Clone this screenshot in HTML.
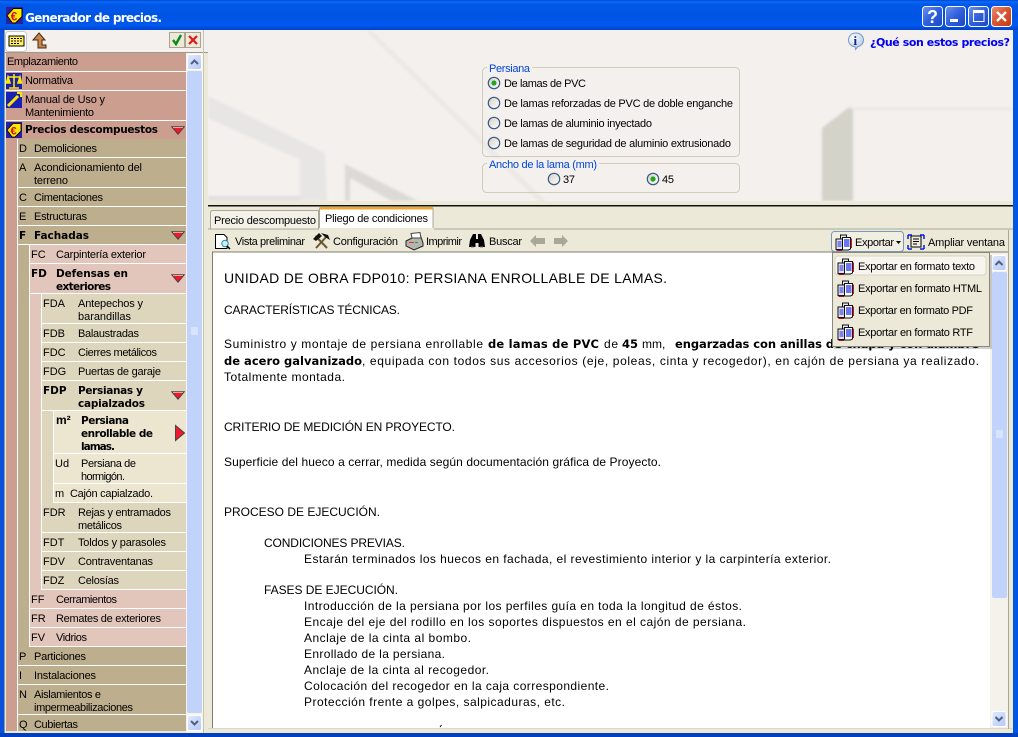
<!DOCTYPE html>
<html><head><meta charset="utf-8"><title>Generador de precios</title>
<style>
html,body{margin:0;padding:0;width:1018px;height:737px;overflow:hidden;background:#0055e5}
svg{display:block}
text{font-family:"Liberation Sans",sans-serif;font-size:11px;fill:#000;white-space:pre}
.b{font-family:"DejaVu Sans","Liberation Sans",sans-serif;font-weight:bold;font-size:10.5px}
.c{font-size:12px}
.bc{font-family:"DejaVu Sans","Liberation Sans",sans-serif;font-weight:bold;font-size:11.5px}
.l{fill:#0046d5}
</style></head><body>
<svg width="1018" height="737" viewBox="0 0 1018 737" xmlns="http://www.w3.org/2000/svg">
<defs>
<linearGradient id="tb" x1="0" y1="0" x2="0" y2="1">
<stop offset="0" stop-color="#0043cf"/><stop offset=".06" stop-color="#0a6af8"/><stop offset=".14" stop-color="#0058e8"/><stop offset=".5" stop-color="#0054e3"/><stop offset=".85" stop-color="#0058ee"/><stop offset="1" stop-color="#0043cf"/>
</linearGradient>
<linearGradient id="cb" x1="0" y1="0" x2="1" y2="1"><stop offset="0" stop-color="#6f93ee"/><stop offset=".5" stop-color="#2f5fdc"/><stop offset="1" stop-color="#1d44c4"/></linearGradient>
<linearGradient id="cr" x1="0" y1="0" x2="1" y2="1"><stop offset="0" stop-color="#e89078"/><stop offset=".5" stop-color="#d9532c"/><stop offset="1" stop-color="#c23a16"/></linearGradient>
<linearGradient id="sb" x1="0" y1="0" x2="1" y2="1"><stop offset="0" stop-color="#e2eafe"/><stop offset="1" stop-color="#b4c8f6"/></linearGradient>
<linearGradient id="rd" x1="0" y1="0" x2="1" y2="1"><stop offset="0" stop-color="#d4d0c8"/><stop offset="1" stop-color="#fff"/></linearGradient>
<radialGradient id="inf" cx=".35" cy=".3" r=".8"><stop offset="0" stop-color="#fff"/><stop offset="1" stop-color="#a8c4e8"/></radialGradient>
<filter id="bl" x="-10%" y="-10%" width="120%" height="120%"><feGaussianBlur stdDeviation="1.2"/></filter>
<symbol id="euro" viewBox="0 0 16 16">
<rect width="16" height="16" fill="#2a1fa0"/><path d="M1 8L7 1.500H15V9L9 15H6Z" fill="#ffe700" stroke="#000" stroke-width=".8"/>
<text x="4.500" y="12.500" style="font-size:11px;font-weight:bold;fill:#d0101a">€</text>
</symbol>
<symbol id="exp" viewBox="0 0 17 17">
<path d="M5.500 1H11.500V6H5.500Z" fill="#e8e8f4" stroke="#111" stroke-width="1"/>
<path d="M1 5H8V15.500H1Z" fill="#dfe0f4" stroke="#111" stroke-width="1"/>
<path d="M2.500 8H6.500M2.500 10H6.500M2.500 12H6.500" stroke="#1a2ad8" stroke-width="1.100"/>
<path d="M7.500 3.500H15.500V15L13.500 16H7.500Z" fill="#fff" stroke="#111" stroke-width="1"/>
<path d="M9 6H14.500M9 8H14.500M9 10H14.500M9 12H14.500" stroke="#1428e8" stroke-width="1.300"/>
<path d="M1.500 16.500H7" stroke="#a01010" stroke-width="1.200"/><path d="M16.300 4.500V14" stroke="#a01010" stroke-width="1.200"/>
</symbol>
<symbol id="rad" viewBox="0 0 14 14"><circle cx="7" cy="7" r="5.700" fill="url(#rd)" stroke="#3c5a80" stroke-width="1.200"/></symbol>
<symbol id="rado" viewBox="0 0 14 14"><circle cx="7" cy="7" r="5.700" fill="url(#rd)" stroke="#3c5a80" stroke-width="1.200"/><circle cx="7" cy="7" r="2.600" fill="#1fa81f"/></symbol>
<symbol id="tri" viewBox="0 0 14 9"><path d="M.8 .8H13.200L7 8.200Z" fill="#f0182a" stroke="#444" stroke-width="1"/><path d="M2 1.500H12" stroke="#f7a0a0" stroke-width="1"/></symbol>
</defs>

<!-- frame -->
<rect width="1018" height="737" fill="#0055e5"/>
<rect width="1018" height="30" fill="url(#tb)"/>
<rect x="0" y="30" width="4" height="707" fill="#0a50d8"/>
<rect x="4" y="30" width="1" height="703" fill="#7f9db9"/>
<rect x="5" y="30" width="1008" height="703" fill="#ece9d8"/>
<rect x="0" y="733" width="1018" height="4" fill="#0040c0"/>
<use href="#euro" x="6" y="7" width="17" height="17"/>
<text x="25" y="22" class="bc" style="font-size:12px;fill:#fff" textLength="137">Generador de precios.</text>

<!-- caption buttons -->
<rect x="922.500" y="6.500" width="20" height="20" rx="3" fill="url(#cb)" stroke="#fff"/>
<text x="927" y="23" style="font-size:18px;font-weight:bold;fill:#fff">?</text>
<rect x="945.500" y="6.500" width="20" height="20" rx="3" fill="url(#cb)" stroke="#fff"/>
<rect x="950" y="19" width="8" height="3" fill="#fff"/>
<rect x="968.500" y="6.500" width="20" height="20" rx="3" fill="url(#cb)" stroke="#fff"/>
<rect x="973.500" y="11" width="10.500" height="10.500" fill="none" stroke="#fff" stroke-width="1"/><rect x="973" y="10" width="11" height="3" fill="#fff"/>
<rect x="991.500" y="6.500" width="20" height="20" rx="3" fill="url(#cr)" stroke="#fff"/>
<path d="M997 12L1006 21M1006 12L997 21" stroke="#fff" stroke-width="2.400"/>

<!-- left toolbar -->
<rect x="5" y="30" width="203" height="22" fill="#f3f0ee"/>
<rect x="5.500" y="31.500" width="21" height="20" rx="3" fill="#fff" stroke="#c8c8d4"/>
<rect x="9" y="36" width="15" height="10" fill="#ffef60" stroke="#000"/>
<path d="M11 38.500H22M11 41H22M11 43.500H19" stroke="#000" stroke-dasharray="2 1"/>
<path d="M39 33L45 40H42V45H46V48H38V40H33Z" fill="#c8864a" stroke="#4a2a10"/>
<rect x="169.500" y="32.500" width="15" height="15" fill="#ece9d8" stroke="#a8a490"/>
<path d="M173 40L176 44L181 35" fill="none" stroke="#0a8a1a" stroke-width="2.400"/>
<rect x="185.500" y="32.500" width="15" height="15" fill="#ece9d8" stroke="#a8a490"/>
<path d="M189 36L197 44M197 36L189 44" stroke="#e01818" stroke-width="2.200"/>
<rect x="5" y="52" width="203" height="1" fill="#9c9a8c"/>

<!-- tree columns -->
<rect x="6" y="53" width="180" height="678" fill="#cc9e90"/>
<rect x="6" y="71" width="180" height="1" fill="#fff"/><rect x="6" y="90" width="180" height="1" fill="#fff"/><rect x="6" y="120" width="180" height="1" fill="#fff"/>
<rect x="17" y="139" width="169" height="592" fill="#fff"/>
<rect x="18" y="245" width="11" height="402" fill="#bdae8e"/>
<rect x="30" y="294" width="11" height="296" fill="#e2c6bc"/>
<rect x="42" y="411" width="11" height="92" fill="#ddd6bd"/>
<!-- level 1 -->
<g fill="#bdae8e">
<rect x="18" y="139" width="168" height="18"/><rect x="18" y="158" width="168" height="29"/><rect x="18" y="188" width="168" height="18"/><rect x="18" y="207" width="168" height="18"/><rect x="18" y="226" width="168" height="18"/>
<rect x="18" y="647" width="168" height="18"/><rect x="18" y="666" width="168" height="18"/><rect x="18" y="685" width="168" height="29"/><rect x="18" y="715" width="168" height="16"/>
</g>
<!-- level 2 -->
<g fill="#e2c6bc">
<rect x="30" y="245" width="156" height="18"/><rect x="30" y="264" width="156" height="29"/>
<rect x="30" y="590" width="156" height="18"/><rect x="30" y="609" width="156" height="18"/><rect x="30" y="628" width="156" height="18"/>
</g>
<!-- level 3 -->
<g fill="#ddd6bd">
<rect x="42" y="294" width="144" height="29"/><rect x="42" y="324" width="144" height="18"/><rect x="42" y="343" width="144" height="18"/><rect x="42" y="362" width="144" height="18"/><rect x="42" y="381" width="144" height="29"/>
<rect x="42" y="503" width="144" height="29"/><rect x="42" y="533" width="144" height="18"/><rect x="42" y="552" width="144" height="18"/><rect x="42" y="571" width="144" height="18"/>
</g>
<!-- level 4 -->
<g fill="#ece6d1">
<rect x="54" y="411" width="132" height="42"/><rect x="54" y="454" width="132" height="29"/><rect x="54" y="484" width="132" height="18"/>
</g>

<!-- tree icons -->
<rect x="6" y="73" width="16" height="16" fill="#1a20b0"/><path d="M14 74V88M9 88H19M8 77H20M8 77L6.500 83H10ZM20 77L18 83H21.500Z" stroke="#ffe700" stroke-width="1.600" fill="#ffe700"/>
<rect x="6" y="92" width="16" height="16" fill="#1a20b0"/><path d="M8 106L18 96" stroke="#ffe700" stroke-width="3"/><path d="M17 93H21V97" fill="none" stroke="#ffe700" stroke-width="2"/>
<use href="#euro" x="6" y="122" width="16" height="16"/>
<use href="#tri" x="171" y="126" width="14" height="9"/>
<use href="#tri" x="171" y="231" width="14" height="9"/>
<use href="#tri" x="171" y="274" width="14" height="9"/>
<use href="#tri" x="171" y="391" width="14" height="9"/>
<path d="M175.500 425.500V440.500L184.500 433Z" fill="#f0182a" stroke="#444"/>

<!-- tree text -->
<text x="7" y="65" textLength="71">Emplazamiento</text>
<text x="25" y="84" textLength="48">Normativa</text>
<text x="25" y="103" textLength="80">Manual de Uso y</text>
<text x="25" y="116" textLength="69">Mantenimiento</text>
<text x="25" y="133" class="b" textLength="133">Precios descompuestos</text>
<text x="19" y="152">D</text><text x="34" y="152" textLength="63">Demoliciones</text>
<text x="19" y="171">A</text><text x="34" y="171" textLength="108">Acondicionamiento del</text>
<text x="34" y="184" textLength="34">terreno</text>
<text x="19" y="201">C</text><text x="34" y="201" textLength="69">Cimentaciones</text>
<text x="19" y="220">E</text><text x="34" y="220" textLength="53">Estructuras</text>
<text x="19" y="239" class="b">F</text><text x="34" y="239" class="b" textLength="55">Fachadas</text>
<text x="31" y="258">FC</text><text x="56" y="258" textLength="90">Carpintería exterior</text>
<text x="31" y="277" class="b">FD</text><text x="56" y="277" class="b" textLength="72">Defensas en</text>
<text x="56" y="290" class="b" textLength="55">exteriores</text>
<text x="43" y="307">FDA</text><text x="78" y="307" textLength="65">Antepechos y</text>
<text x="78" y="320" textLength="53">barandillas</text>
<text x="43" y="337">FDB</text><text x="78" y="337" textLength="61">Balaustradas</text>
<text x="43" y="356">FDC</text><text x="78" y="356" textLength="79">Cierres metálicos</text>
<text x="43" y="375">FDG</text><text x="78" y="375" textLength="83">Puertas de garaje</text>
<text x="43" y="394" class="b">FDP</text><text x="78" y="394" class="b" textLength="65">Persianas y</text>
<text x="78" y="407" class="b" textLength="67">capialzados</text>
<text x="56" y="424" style="font-size:12px;font-weight:bold">m²</text><text x="81" y="424" class="b" textLength="48">Persiana</text>
<text x="81" y="437" class="b" textLength="72">enrollable de</text>
<text x="81" y="450" class="b" textLength="34">lamas.</text>
<text x="55" y="467">Ud</text><text x="81" y="467" textLength="55">Persiana de</text>
<text x="81" y="480" textLength="44">hormigón.</text>
<text x="55" y="497">m</text><text x="70" y="497" textLength="83">Cajón capialzado.</text>
<text x="43" y="516">FDR</text><text x="78" y="516" textLength="93">Rejas y entramados</text>
<text x="78" y="529" textLength="44">metálicos</text>
<text x="43" y="546">FDT</text><text x="78" y="546" textLength="88">Toldos y parasoles</text>
<text x="43" y="565">FDV</text><text x="78" y="565" textLength="75">Contraventanas</text>
<text x="43" y="584">FDZ</text><text x="78" y="584" textLength="41">Celosías</text>
<text x="31" y="603">FF</text><text x="56" y="603" textLength="61">Cerramientos</text>
<text x="31" y="622">FR</text><text x="56" y="622" textLength="105">Remates de exteriores</text>
<text x="31" y="641">FV</text><text x="56" y="641" textLength="31">Vidrios</text>
<text x="19" y="660">P</text><text x="34" y="660" textLength="52">Particiones</text>
<text x="19" y="679">I</text><text x="34" y="679" textLength="62">Instalaciones</text>
<text x="19" y="698">N</text><text x="34" y="698" textLength="67">Aislamientos e</text>
<text x="34" y="711" textLength="99">impermeabilizaciones</text>
<text x="19" y="728">Q</text><text x="34" y="728" textLength="44">Cubiertas</text>

<!-- left scrollbar -->
<rect x="186" y="53" width="17" height="680" fill="#f6f4ec"/>
<rect x="187" y="71" width="15" height="642" rx="2" fill="#c1d3fb"/>
<path d="M191 328H198M191 330H198M191 332H198M191 334H198" stroke="#eef3ff"/>
<rect x="187.500" y="54.500" width="14" height="15" rx="2" fill="url(#sb)" stroke="#fff"/>
<path d="M191 64L194.500 60.500L198 64" fill="none" stroke="#4d6185" stroke-width="2"/>
<rect x="187.500" y="715.500" width="14" height="15" rx="2" fill="url(#sb)" stroke="#fff"/>
<path d="M191 721L194.500 724.500L198 721" fill="none" stroke="#4d6185" stroke-width="2"/>
<rect x="203" y="30" width="1" height="703" fill="#c8c5b4"/>

<!-- top-right area -->
<rect x="208" y="30" width="805" height="171" fill="#f3f0ee"/>
<clipPath id="tc"><rect x="208" y="30" width="805" height="171"/></clipPath>
<g clip-path="url(#tc)"><g filter="url(#bl)">
<path d="M208 96L325 153L327 201H300V160L208 118Z" fill="#e8e6e5"/>
<path d="M208 196H300V201H208Z" fill="#e2e0de"/>
<path d="M345 164L418 201H392L350 178V201H345Z" fill="#dcdad6"/>
<path d="M366 31H373L560 215H552Z" fill="#ecE9e5"/>
<path d="M822 128L848 108H853V201H822Z" fill="#d3d3ca"/>
<path d="M852 108H1013V110H852Z" fill="#ebe6e3"/>
</g></g>
<rect x="208" y="205" width="805" height="1.500" fill="#111"/>

<!-- info link -->
<path d="M856 33C860.500 33 863.500 36 863.500 40C863.500 43.500 861 46 858 46.500L855.500 49.500L855 46.800C851.500 46.300 848.500 44 848.500 40C848.500 36 851.500 33 856 33Z" fill="url(#inf)" stroke="#7c9cc4"/>
<text x="853.500" y="45" style="font-size:13px;font-weight:bold;font-family:'Liberation Serif',serif;fill:#10208a">i</text>
<text x="870" y="46" class="bc" style="fill:#0000f0;font-size:11px" textLength="140">¿Qué son estos precios?</text>

<!-- group boxes -->
<rect x="482.500" y="67.500" width="257" height="89" rx="4" fill="none" stroke="#d0ccb8"/>
<rect x="487" y="62" width="45" height="10" fill="#f3f0ee"/>
<text x="489" y="72" class="l" textLength="41">Persiana</text>
<use href="#rado" x="487" y="76" width="14" height="14"/>
<use href="#rad" x="487" y="96" width="14" height="14"/>
<use href="#rad" x="487" y="116" width="14" height="14"/>
<use href="#rad" x="487" y="136" width="14" height="14"/>
<text x="504" y="87" textLength="82">De lamas de PVC</text>
<text x="504" y="107" textLength="229">De lamas reforzadas de PVC de doble enganche</text>
<text x="504" y="127" textLength="148">De lamas de aluminio inyectado</text>
<text x="504" y="147" textLength="227">De lamas de seguridad de aluminio extrusionado</text>
<rect x="482.500" y="163.500" width="257" height="29" rx="4" fill="none" stroke="#d0ccb8"/>
<rect x="487" y="158" width="112" height="10" fill="#f3f0ee"/>
<text x="489" y="168" class="l" textLength="108">Ancho de la lama (mm)</text>
<use href="#rad" x="547" y="172" width="14" height="14"/>
<text x="563" y="183" textLength="12">37</text>
<use href="#rado" x="646" y="172" width="14" height="14"/>
<text x="662" y="183" textLength="12">45</text>

<!-- tabs -->
<path d="M210.500 229V213Q210.500 210.500 213 210.500H318.500V229Z" fill="#f4f2e8" stroke="#a8a898"/>
<text x="214" y="224" textLength="102">Precio descompuesto</text>
<path d="M319.500 229V209Q319.500 207.500 321 207.500H431Q433 207.500 433 209V229Z" fill="#fff" stroke="#a8a898"/>
<rect x="320" y="207" width="113" height="2.500" fill="#f0a830"/>
<text x="325" y="222" textLength="103">Pliego de condiciones</text>
<rect x="208" y="228.500" width="805" height="1" fill="#a8a898"/>
<rect x="319" y="228" width="115" height="2" fill="#ece9d8"/>

<!-- toolbar icons -->
<path d="M215.500 234.500H224L227 237.500V248.500H215.500Z" fill="#fff" stroke="#000"/><circle cx="225" cy="243.500" r="3.200" fill="#cfeef5" stroke="#2090a8"/><path d="M227 246L230 249" stroke="#000" stroke-width="1.500"/>
<text x="235" y="245" textLength="70">Vista preliminar</text>
<path d="M315.500 236L327 248" stroke="#6a5530" stroke-width="2"/><path d="M327 236L316 248" stroke="#6a5530" stroke-width="2"/><path d="M313 239L319 233L322 236L316 241ZM321 233L328 235L330 240L325 237Z" fill="#111"/>
<text x="333" y="245" textLength="65">Configuración</text>
<path d="M406 241L414 237H421L423 243V246L414 250L406 246Z" fill="#b5b5b0" stroke="#222"/><path d="M411 233.500L420 232.500L421 238H412Z" fill="#fff" stroke="#444"/><path d="M409 242.500H414" stroke="#e03030"/><path d="M415 242.500H418" stroke="#20a040"/>
<text x="426" y="245" textLength="36">Imprimir</text>
<path d="M469 247L470 240L473 234H476V239H478V234H481L484 240L485 247H478.500V243H475.500V247Z" fill="#000"/><path d="M471 247H474M480 247H483" stroke="#777"/>
<text x="489" y="245" textLength="33">Buscar</text>
<path d="M530 241L536 235V238H545V244H536V247Z" fill="#a8a898"/>
<path d="M568 241L562 235V238H554V244H562V247Z" fill="#a8a898"/>

<!-- content -->
<rect x="212" y="252" width="778" height="476" fill="#fff"/>
<path d="M212 252H1008" stroke="#7f7c70"/><path d="M212.500 252V728" stroke="#7f7c70"/>
<rect x="208" y="728" width="805" height="1" fill="#d8d6ca"/>
<rect x="208" y="730" width="805" height="3" fill="#ece9d8"/>
<text x="224" y="283" style="font-size:14px" textLength="443">UNIDAD DE OBRA FDP010: PERSIANA ENROLLABLE DE LAMAS.</text>
<text x="224" y="314" class="c" textLength="176">CARACTERÍSTICAS TÉCNICAS.</text>
<text x="224" y="348" class="c" textLength="259">Suministro y montaje de persiana enrollable</text>
<text x="488" y="348" class="bc" textLength="111">de lamas de PVC</text>
<text x="604" y="348" class="c" textLength="14">de</text>
<text x="622" y="348" class="bc">45</text>
<text x="642" y="348" class="c">mm,</text>
<text x="675" y="348" class="bc" textLength="304">engarzadas con anillas de chapa y con alambre</text>
<text x="224" y="365" class="bc" textLength="138">de acero galvanizado</text>
<text x="362" y="365" class="c" textLength="617">, equipada con todos sus accesorios (eje, poleas, cinta y recogedor), en cajón de persiana ya realizado.</text>
<text x="224" y="381" class="c" textLength="121">Totalmente montada.</text>
<text x="224" y="431" class="c" textLength="231">CRITERIO DE MEDICIÓN EN PROYECTO.</text>
<text x="224" y="466" class="c" textLength="437">Superficie del hueco a cerrar, medida según documentación gráfica de Proyecto.</text>
<text x="224" y="516" class="c" textLength="156">PROCESO DE EJECUCIÓN.</text>
<text x="264" y="547" class="c" textLength="141">CONDICIONES PREVIAS.</text>
<text x="304" y="563" class="c" textLength="527">Estarán terminados los huecos en fachada, el revestimiento interior y la carpintería exterior.</text>
<text x="264" y="594" class="c" textLength="134">FASES DE EJECUCIÓN.</text>
<text x="304" y="610" class="c" textLength="438">Introducción de la persiana por los perfiles guía en toda la longitud de éstos.</text>
<text x="304" y="626" class="c" textLength="442">Encaje del eje del rodillo en los soportes dispuestos en el cajón de persiana.</text>
<text x="304" y="642" class="c" textLength="167">Anclaje de la cinta al bombo.</text>
<text x="304" y="658" class="c" textLength="141">Enrollado de la persiana.</text>
<text x="304" y="674" class="c" textLength="185">Anclaje de la cinta al recogedor.</text>
<text x="304" y="690" class="c" textLength="305">Colocación del recogedor en la caja correspondiente.</text>
<text x="304" y="706" class="c" textLength="261">Protección frente a golpes, salpicaduras, etc.</text>
<path d="M440 727L441.500 725" stroke="#000"/>

<!-- right scrollbar -->
<rect x="990" y="253" width="18" height="475" fill="#f4f2ea"/>
<rect x="992" y="272" width="15" height="326" rx="2" fill="#c1d3fb"/>
<path d="M996 431H1003M996 433H1003M996 435H1003M996 437H1003" stroke="#eef3ff"/>
<rect x="992" y="255.500" width="14" height="15" rx="2" fill="url(#sb)" stroke="#fff"/>
<path d="M995.500 265L999 261.500L1002.500 265" fill="none" stroke="#4d6185" stroke-width="2"/>
<rect x="992" y="711.500" width="14" height="15" rx="2" fill="url(#sb)" stroke="#fff"/>
<path d="M995.500 717L999 720.500L1002.500 717" fill="none" stroke="#4d6185" stroke-width="2"/>
<path d="M1008.500 230V729" stroke="#a8a898"/>

<!-- export button -->
<rect x="831.500" y="231.500" width="72" height="20" rx="3" fill="#fff" fill-opacity=".25" stroke="#7a98b8"/>
<use href="#exp" x="835" y="234" width="17" height="17"/>
<text x="855" y="246" textLength="39">Exportar</text>
<path d="M896 241H901L898.500 244Z" fill="#000"/>
<path d="M911 236H921V247H911Z" fill="#f0eee0" stroke="#000"/><path d="M913 239H919M913 241.500H919M913 244H917" stroke="#000"/>
<path d="M908 235V239M908 235H912M924 235V239M924 235H920M908 249V245M908 249H912M924 249V245M924 249H920" stroke="#0020e0" stroke-width="1.500" fill="none"/>
<text x="928" y="246" textLength="77">Ampliar ventana</text>

<!-- menu -->
<rect x="834" y="255" width="158" height="94" fill="#000" fill-opacity=".18"/>
<rect x="832.500" y="252.500" width="157" height="94" fill="#ece9d8" stroke="#8a887a"/>
<rect x="835" y="256" width="151" height="19" rx="3" fill="#f7f5ee" stroke="#d8d5c4"/>
<use href="#exp" x="837" y="258" width="17" height="17"/>
<use href="#exp" x="837" y="280" width="17" height="17"/>
<use href="#exp" x="837" y="302" width="17" height="17"/>
<use href="#exp" x="837" y="324" width="17" height="17"/>
<text x="858" y="270" textLength="117">Exportar en formato texto</text>
<text x="858" y="292" textLength="124">Exportar en formato HTML</text>
<text x="858" y="314" textLength="115">Exportar en formato PDF</text>
<text x="858" y="336" textLength="115">Exportar en formato RTF</text>
</svg>
</body></html>
